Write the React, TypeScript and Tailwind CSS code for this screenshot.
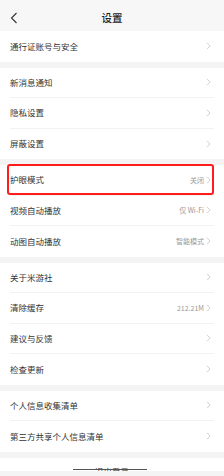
import React from "react";

type Row = { label: string; value?: string; highlight?: boolean };

const groups: Row[][] = [
    [{ label: "通行证账号与安全" }],
    [{ label: "新消息通知" }, { label: "隐私设置" }, { label: "屏蔽设置" }],
    [
        { label: "护眼模式", value: "关闭", highlight: true },
        { label: "视频自动播放", value: "仅 Wi-Fi" },
        { label: "动图自动播放", value: "智能模式" },
    ],
    [{ label: "关于米游社" }, { label: "清除缓存", value: "212.21M" }, { label: "建议与反馈" }, { label: "检查更新" }],
    [{ label: "个人信息收集清单" }, { label: "第三方共享个人信息清单" }],
];

function Chevron() {
    return (
        <svg width="5" height="8" viewBox="0 0 5 8" fill="none" className="ml-[2px]">
            <path d="M1 0.8L4 4L1 7.2" stroke="#c4c4c4" strokeWidth="0.8" />
        </svg>
    );
}

function SettingRow({ row, last }: { row: Row; last: boolean }) {
    return (
        <div className="relative h-[30.5px] px-[10px]">
            <div className={`flex h-full items-center pr-[3px] ${last ? "" : "border-b border-[#f2f2f2]"}`}>
                <span className="flex-1 text-[8.5px] text-[#333333]">{row.label}</span>
                {row.value && <span className="text-[7px] text-[#999999]">{row.value}</span>}
                <Chevron />
            </div>
            {row.highlight && (
                <div className="absolute left-[7px] right-[10px] top-[-1px] bottom-[1px] rounded-[3px] border-2 border-[#ff1c1c]" />
            )}
        </div>
    );
}

export default function App() {
    return (
        <div
            className="relative h-[476px] w-[224px] overflow-hidden bg-[#f4f4f4]"
            style={{ fontFamily: '"Noto Sans CJK SC", "Noto Sans", sans-serif' }}
        >
            <div className="relative flex h-[31px] items-center justify-center bg-[#f7f7f7]">
                <svg width="8" height="12" viewBox="0 0 8 12" fill="none" className="absolute left-[10px] top-[12px]">
                    <path d="M6.5 1L1.5 6L6.5 11" stroke="#333333" strokeWidth="1.1" />
                </svg>
                <span className="mt-[4px] text-[10.5px] font-medium text-[#222222]">设置</span>
            </div>

            <div className="flex flex-col gap-[6px]">
                {groups.map((g, gi) => (
                    <div key={gi} className="bg-white">
                        {g.map((row, ri) => (
                            <SettingRow key={row.label} row={row} last={ri === g.length - 1} />
                        ))}
                    </div>
                ))}
                <div className="flex h-[30px] justify-center bg-white pt-[7px]">
                    <span className="text-[8.5px] text-[#333333]">退出登录</span>
                </div>
            </div>

            <div className="absolute bottom-0 left-0 right-0 h-[5px] bg-[#f4f4f4]" />
            <div className="absolute bottom-[6px] left-[73px] h-[1px] w-[74px] bg-[#555555]" />
        </div>
    );
}
